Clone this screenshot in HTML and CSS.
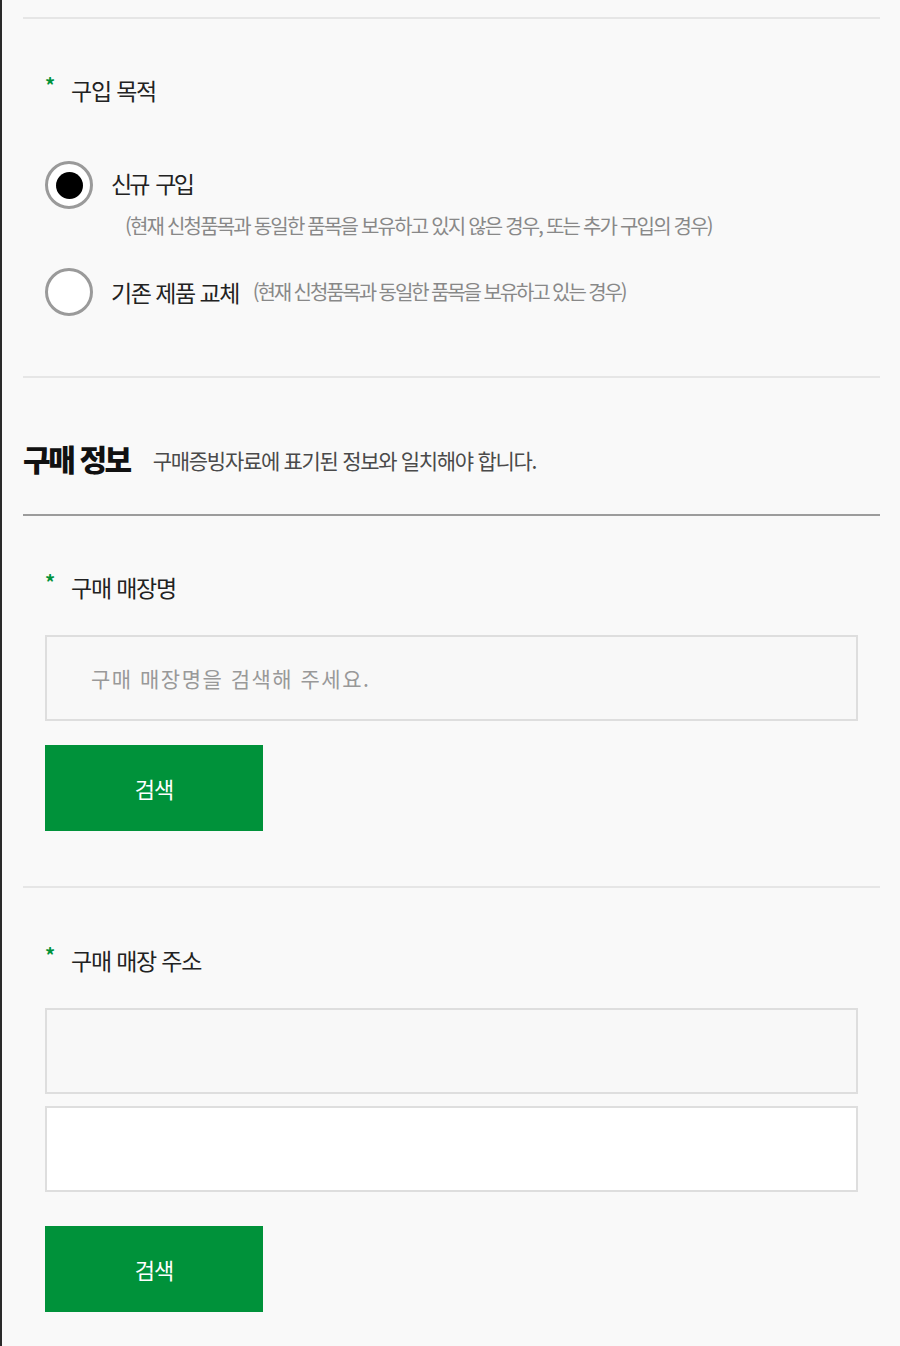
FILE: index.html
```html
<!DOCTYPE html>
<html lang="ko">
<head>
<meta charset="utf-8">
<title>구매 정보</title>
<link rel="stylesheet" href="styles.css">
</head>
<body>
<div class="page">
  <hr class="rule rule-top">

  <section class="field purpose">
    <div class="label"><span class="req">*</span><span>구입 목적</span></div>
    <div class="options">
      <label class="option option-new">
        <span class="radio checked"><span class="dot"></span></span>
        <span class="option-text">
          <span class="option-title">신규 구입</span>
          <span class="option-note">(현재 신청품목과 동일한 품목을 보유하고 있지 않은 경우, 또는 추가 구입의 경우)</span>
        </span>
      </label>
      <label class="option option-replace">
        <span class="radio"></span>
        <span class="option-title">기존 제품 교체</span>
        <span class="option-note inline">(현재 신청품목과 동일한 품목을 보유하고 있는 경우)</span>
      </label>
    </div>
  </section>

  <hr class="rule rule-mid">

  <div class="section-head">
    <h2>구매 정보</h2>
    <p>구매증빙자료에 표기된 정보와 일치해야 합니다.</p>
  </div>

  <hr class="rule rule-dark">

  <section class="field store">
    <div class="label"><span class="req">*</span><span>구매 매장명</span></div>
    <div class="input"><span class="placeholder">구매 매장명을 검색해 주세요.</span></div>
    <button class="btn" type="button">검색</button>
  </section>

  <hr class="rule rule-mid2">

  <section class="field address">
    <div class="label"><span class="req">*</span><span>구매 매장 주소</span></div>
    <div class="input"></div>
    <div class="input input-white"></div>
    <button class="btn btn-addr" type="button">검색</button>
  </section>
</div>
</body>
</html>
```

FILE: styles.css
```css
* {
  box-sizing: border-box;
}

html, body {
  margin: 0;
  padding: 0;
  background: #f9f9f9;
}

body {
  font-family: "Noto Sans CJK KR", "Noto Sans", sans-serif;
  color: #222;
}

.page {
  width: 900px;
  min-height: 1346px;
  border-left: 2px solid #2a2a2a;
  padding: 17px 20px 0 21px;
}

.rule {
  border: 0;
  height: 2px;
  margin: 0;
  background: #e6e6e6;
}

.rule-dark {
  background: #9c9c9c;
}

.field {
  padding: 0 22px;
}

.label {
  display: flex;
  align-items: center;
  height: 30px;
  font-size: 23px;
  letter-spacing: -1.2px;
  line-height: 30px;
  color: #222;
}

.req {
  color: #00923a;
  font-size: 20px;
  font-weight: 700;
  width: 26px;
  letter-spacing: 0;
  position: relative;
  top: -5px;
}

/* purpose */
.purpose {
  padding-top: 56px;
}

.options {
  margin-top: 56px;
  display: flex;
  flex-direction: column;
  gap: 27px;
}

.option {
  display: flex;
  align-items: flex-start;
}

.option-replace {
  align-items: center;
}

.radio {
  flex: none;
  width: 48px;
  height: 48px;
  border-radius: 50%;
  border: 3px solid #9a9a9a;
  background: #fff;
  display: flex;
  align-items: center;
  justify-content: center;
  margin-right: 18px;
}

.dot {
  width: 27px;
  height: 27px;
  border-radius: 50%;
  background: #000;
}

.option-text {
  display: flex;
  flex-direction: column;
  padding-top: 7px;
}

.option-title {
  font-size: 23px;
  line-height: 30px;
  letter-spacing: -1.5px;
  color: #222;
}

.option-new .option-title {
  letter-spacing: -2.8px;
  word-spacing: 4px;
}

.option-note {
  font-size: 20px;
  line-height: 30px;
  letter-spacing: -1.8px;
  color: #888;
  margin-top: 13px;
  padding-left: 14px;
  white-space: nowrap;
}

.option-note.inline {
  margin-top: 0;
  padding-left: 14px;
  letter-spacing: -2.1px;
}

/* section head */
.section-head {
  display: flex;
  align-items: center;
  height: 36px;
  margin: 62px 0 38px;
}

.section-head h2 {
  margin: 0;
  font-size: 30px;
  font-weight: 900;
  letter-spacing: -2.4px;
  line-height: 36px;
  color: #111;
}

.section-head p {
  margin: 0 0 0 23px;
  font-size: 21px;
  letter-spacing: -1.3px;
  line-height: 36px;
  color: #4a4a4a;
  position: relative;
  top: 2px;
}

/* inputs */
.store {
  padding-top: 56px;
}

.address {
  padding-top: 57px;
}

.input {
  height: 86px;
  border: 2px solid #dedede;
  background: #f8f8f8;
  display: flex;
  align-items: center;
  padding-left: 44px;
  margin-top: 33px;
}

.input + .input {
  margin-top: 12px;
}

.input-white {
  background: #fff;
}

.placeholder {
  font-size: 21px;
  letter-spacing: 1.5px;
  color: #999;
}

.btn {
  display: flex;
  align-items: center;
  justify-content: center;
  width: 218px;
  height: 86px;
  margin-top: 24px;
  border: 0;
  background: #00923a;
  color: #fff;
  font-family: "Noto Sans CJK KR", "Noto Sans", sans-serif;
  font-size: 22px;
  letter-spacing: -1px;
  padding: 0;
}

.btn-addr {
  margin-top: 34px;
}

.rule-mid2 {
  margin-top: 55px;
}

.rule-mid {
  margin-top: 60px;
}
```
